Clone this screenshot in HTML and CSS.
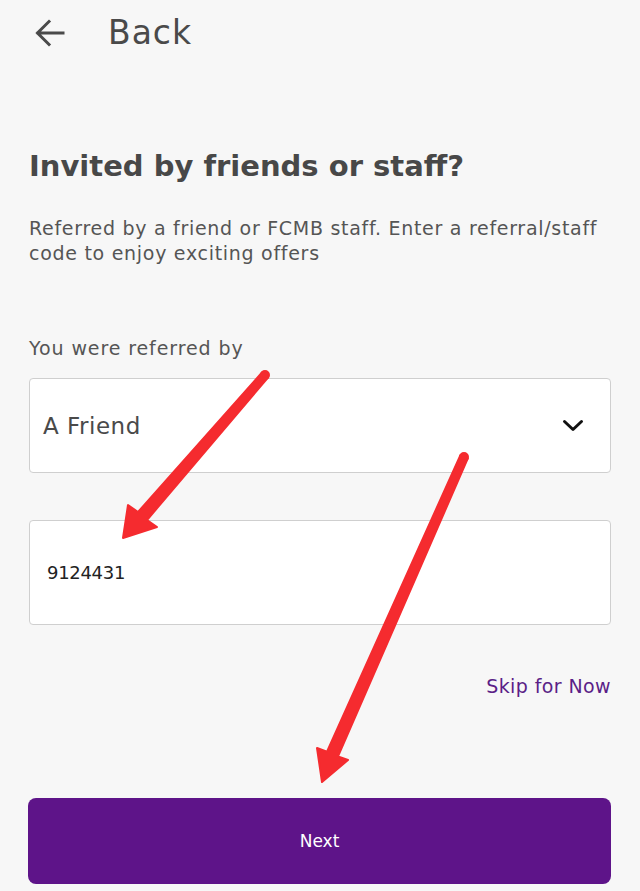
FILE: index.html
```html
<!DOCTYPE html>
<html lang="en">
<head>
<meta charset="utf-8">
<title>Invited by friends or staff?</title>
<link rel="stylesheet" href="styles.css">
</head>
<body>
<div class="page">
  <header class="topbar">
    <svg class="back-icon" viewBox="0 0 30 30" width="30" height="30" aria-hidden="true">
      <path d="M28 15H3M14 3.5L2.5 15L14 26.5" fill="none" stroke="#4a4a4a" stroke-width="3" stroke-linecap="square"/>
    </svg>
    <span class="back-text">Back</span>
  </header>

  <h1 class="title">Invited by friends or staff?</h1>
  <p class="desc">Referred by a friend or FCMB staff. Enter a referral/staff code to enjoy exciting offers</p>

  <div class="label">You were referred by</div>
  <div class="field select">
    <span class="select-value">A Friend</span>
    <svg class="chevron" viewBox="0 0 22 13" width="22" height="13" aria-hidden="true">
      <path d="M2.5 2.5l8.5 8 8.5-8" fill="none" stroke="#111" stroke-width="3" stroke-linecap="round" stroke-linejoin="round"/>
    </svg>
  </div>

  <div class="field input">
    <span class="input-value">9124431</span>
  </div>

  <div class="skip-row"><span class="skip">Skip for Now</span></div>

  <div class="btn">Next</div>
</div>

<svg class="annotations" viewBox="0 0 640 891" width="640" height="891" aria-hidden="true">
  <g fill="#f52b2f" stroke="#f52b2f" stroke-width="2" stroke-linejoin="round">
    <polygon points="262,372.4 138,512 128,505 123,538 157,527 147,520 268,377.6"/>
    <circle cx="265" cy="375" r="4"/>
    <polygon points="460.3,455.4 327,751.6 317,748 322,782 348,760 338,756.4 467.7,458.6"/>
    <circle cx="464" cy="457" r="4"/>
  </g>
</svg>
</body>
</html>
```

FILE: styles.css
```css
html, body {
  margin: 0;
  padding: 0;
  background: #f7f7f7;
}

body {
  font-family: "DejaVu Sans", "Open Sans", sans-serif;
  color: #4a4a4a;
  width: 640px;
  height: 891px;
  overflow: hidden;
  position: relative;
}

.page {
  padding: 0 29px;
}

.topbar {
  height: 66px;
  display: flex;
  align-items: center;
  padding-left: 6px;
}

.back-icon {
  display: block;
}

.back-text {
  margin-left: 43px;
  font-size: 33px;
  line-height: 40px;
  letter-spacing: 1px;
  color: #4a4a4a;
}

.title {
  margin: 82px 0 0;
  font-size: 29px;
  line-height: 36px;
  font-weight: bold;
  color: #484848;
}

.desc {
  margin: 31.5px 0 0;
  font-size: 19px;
  line-height: 25px;
  letter-spacing: 0.71px;
  color: #555;
}

.label {
  margin-top: 70px;
  font-size: 19px;
  line-height: 25px;
  letter-spacing: 0.9px;
  color: #555;
}

.field {
  background: #fff;
  border: 1px solid #cfcfcf;
  border-radius: 4px;
  box-sizing: border-box;
  display: flex;
  align-items: center;
}

.select {
  margin-top: 17.5px;
  height: 95px;
  padding: 0 26px 0 13px;
  justify-content: space-between;
}

.select-value {
  font-size: 23px;
  letter-spacing: 0.5px;
  color: #4a4a4a;
}

.chevron {
  display: block;
}

.input {
  margin-top: 47px;
  height: 105px;
  padding: 0 17px;
}

.input-value {
  font-size: 18px;
  letter-spacing: -0.3px;
  color: #222;
}

.skip-row {
  margin-top: 48.5px;
  display: flex;
  justify-content: flex-end;
  line-height: 25px;
}

.skip {
  font-size: 19px;
  letter-spacing: 0.4px;
  color: #5b1f87;
}

.btn {
  margin-top: 99.5px;
  height: 86px;
  margin-left: -1px;
  background: #5e1489;
  border-radius: 8px;
  color: #fff;
  font-size: 17px;
  display: flex;
  align-items: center;
  justify-content: center;
}

.annotations {
  position: absolute;
  left: 0;
  top: 0;
  pointer-events: none;
}
```
